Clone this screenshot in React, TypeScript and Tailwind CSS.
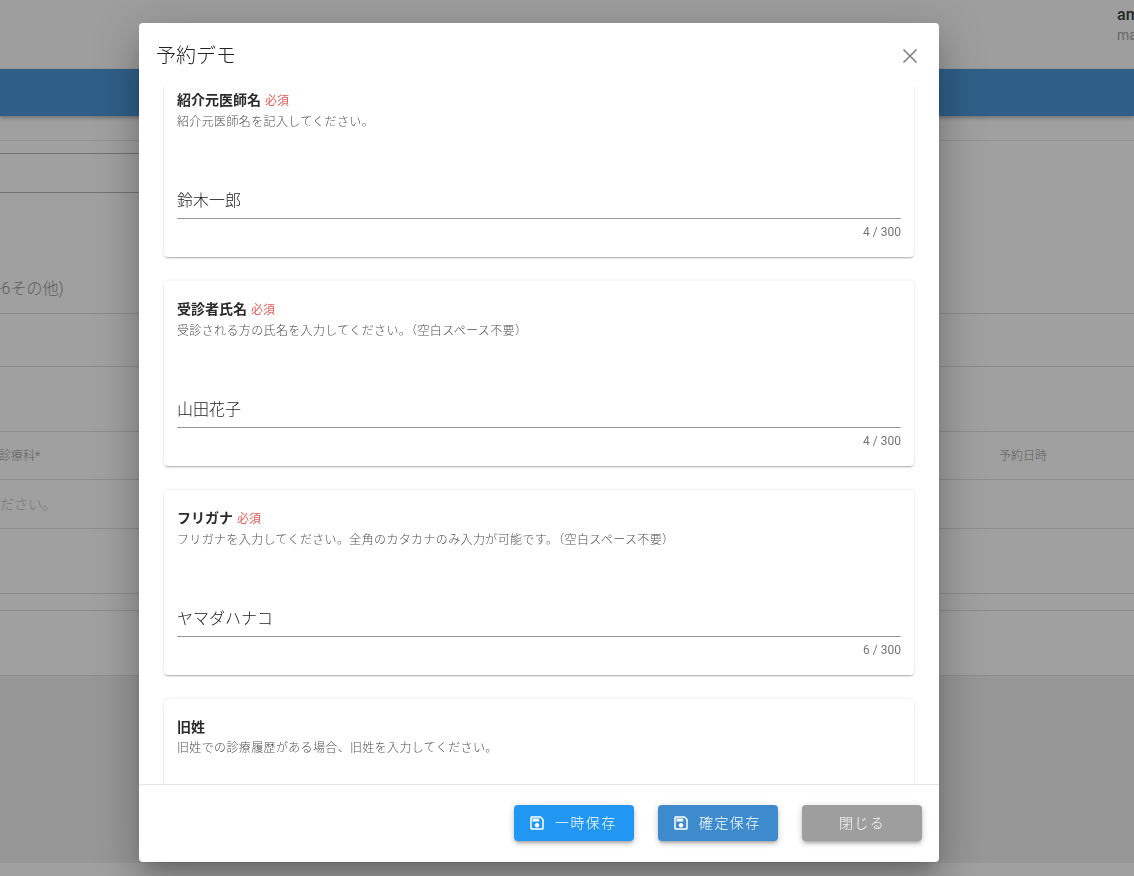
const FONT = "font-['Roboto','Noto_Sans_CJK_JP',sans-serif]";

const CARDS = [
  { label: "紹介元医師名", required: true, help: "紹介元医師名を記入してください。", value: "鈴木一郎", count: "4 / 300" },
  { label: "受診者氏名", required: true, help: "受診される方の氏名を入力してください。（空白スペース不要）", value: "山田花子", count: "4 / 300" },
  { label: "フリガナ", required: true, help: "フリガナを入力してください。全角のカタカナのみ入力が可能です。（空白スペース不要）", value: "ヤマダハナコ", count: "6 / 300" },
  { label: "旧姓", required: false, help: "旧姓での診療履歴がある場合、旧姓を入力してください。", value: "", count: "0 / 300" },
];

const BUTTON_SHADOW = "shadow-[0_3px_3px_-2px_rgba(0,0,0,0.25),0_3px_4px_rgba(0,0,0,0.14),0_1px_8px_rgba(0,0,0,0.12)]";

function SaveIcon() {
  return (
    <svg viewBox="0 0 24 24" className="h-[18px] w-[18px] fill-current">
      <path d="M17 3H5C3.89 3 3 3.9 3 5V19C3 20.1 3.89 21 5 21H19C20.1 21 21 20.1 21 19V7L17 3M19 19H5V5H16.17L19 7.83V19M12 12C10.34 12 9 13.34 9 15S10.34 18 12 18 15 16.66 15 15 13.66 12 12 12M6 6H15V10H6V6Z" />
    </svg>
  );
}

function Background() {
  return (
    <div className="h-[876px] w-[1134px] overflow-hidden bg-[#a0a0a0] font-light text-[#5c5c5c]">
      {/* Top bar */}
      <div className="flex h-[69px] justify-end bg-[#9e9e9e] pl-[1117px]">
        <div className="w-full overflow-hidden whitespace-nowrap pt-[3px]">
          <div className="text-[16px] leading-[24px] font-medium text-[#262626]">amane</div>
          <div className="text-[14px] leading-[16px] font-normal text-[#666]">mail@example.jp</div>
        </div>
      </div>
      <div className="h-[47px] bg-[#2f5f88] shadow-[0_2px_4px_rgba(0,0,0,0.3)]" />
      {/* Form rows */}
      <div className="h-[25px] border-b border-[#929292]" />
      <div className="h-[12px]" />
      <div className="h-[40px] w-[139px] border-y border-[#727272]" />
      <div className="flex h-[121px] items-end border-b border-[#8c8c8c] pb-[12px] text-[16px] leading-[24px] whitespace-nowrap">
        <span className="-ml-[3px]">-6その他)</span>
      </div>
      <div className="h-[53px] border-b border-[#8c8c8c]" />
      <div className="h-[65px] border-b border-[#8c8c8c]" />
      {/* Table */}
      <div className="flex h-[48px] items-center justify-between border-b border-[#8c8c8c] pr-[87px] text-[12px]">
        <span className="-ml-[1px]">診療科*</span>
        <span>予約日時</span>
      </div>
      <div className="flex h-[49px] items-center border-b border-[#8c8c8c] text-[14px] text-[#747474]">
        <span>ださい。</span>
      </div>
      <div className="h-[65px] border-b border-[#8c8c8c]" />
      <div className="h-[17px] border-b border-[#8c8c8c]" />
      <div className="h-[65px] border-b border-[#8c8c8c]" />
      <div className="h-[187px] bg-[#979797]" />
    </div>
  );
}

function Card({ label, required, help, value, count }: (typeof CARDS)[number]) {
  return (
    <div className="h-[185px] rounded bg-white px-[13px] pt-[18px] shadow-[0_2px_2px_-1px_rgba(0,0,0,0.3),0_0_3px_rgba(0,0,0,0.12)]">
      <div className="flex items-baseline text-[14px] leading-[20px] font-bold text-[#2b2b2b]">
        {label}
        {required && <span className="ml-[4px] text-[12px] font-normal text-[#dc625e]">必須</span>}
      </div>
      <p className="mt-[1px] text-[12px] leading-[20px] font-light tracking-[0.03em] text-[#4f4f4f]">{help}</p>
      <div className="mt-[50px] h-[37px] border-b border-[#979797] text-[16px] leading-[38px] font-light text-[#222]">{value}</div>
      <div className="mt-[5px] text-right text-[12px] leading-[16px] text-[#757575]">{count}</div>
    </div>
  );
}

export default function App() {
  return (
    <div className={`relative h-[876px] w-[1134px] overflow-hidden ${FONT}`}>
      <Background />
      {/* Dialog */}
      <div className="absolute top-[23px] left-[139px] flex h-[839px] w-[800px] flex-col overflow-hidden rounded bg-white shadow-[0_11px_15px_-7px_rgba(0,0,0,0.2),0_24px_38px_3px_rgba(0,0,0,0.14),0_9px_46px_8px_rgba(0,0,0,0.12)] will-change-transform">
        <div className="flex h-[64px] shrink-0 items-center justify-between pt-[2px] pr-[17px] pl-[18px]">
          <h2 className="-ml-[1px] text-[20px] font-light text-[#222]">予約デモ</h2>
          <svg viewBox="0 0 24 24" className="h-[24px] w-[24px] fill-none stroke-[#808080] stroke-[1.6]">
            <path d="M5.5 5.5L18.5 18.5M18.5 5.5L5.5 18.5" />
          </svg>
        </div>
        <div className="min-h-0 flex-1 overflow-hidden">
          <div className="-mt-[15px] flex flex-col gap-[24px] pr-[25px] pl-[25px]">
            {CARDS.map((card) => (
              <Card key={card.label} {...card} />
            ))}
          </div>
        </div>
        <div className="flex h-[78px] shrink-0 items-start justify-end gap-[24px] border-t border-[#e3e3e3] pt-[20px] pr-[17px] text-[14px] font-light tracking-[0.1em] text-white">
          <button className={`flex h-[36px] w-[120px] items-center gap-[9px] rounded bg-[#2196f3] pl-[14px] ${BUTTON_SHADOW}`}>
            <SaveIcon />
            一時保存
          </button>
          <button className={`flex h-[36px] w-[120px] items-center gap-[9px] rounded bg-[#3d8bcd] pl-[14px] ${BUTTON_SHADOW}`}>
            <SaveIcon />
            確定保存
          </button>
          <button className={`flex h-[36px] w-[120px] items-center justify-center rounded bg-[#9e9e9e] ${BUTTON_SHADOW}`}>
            閉じる
          </button>
        </div>
      </div>
    </div>
  );
}
